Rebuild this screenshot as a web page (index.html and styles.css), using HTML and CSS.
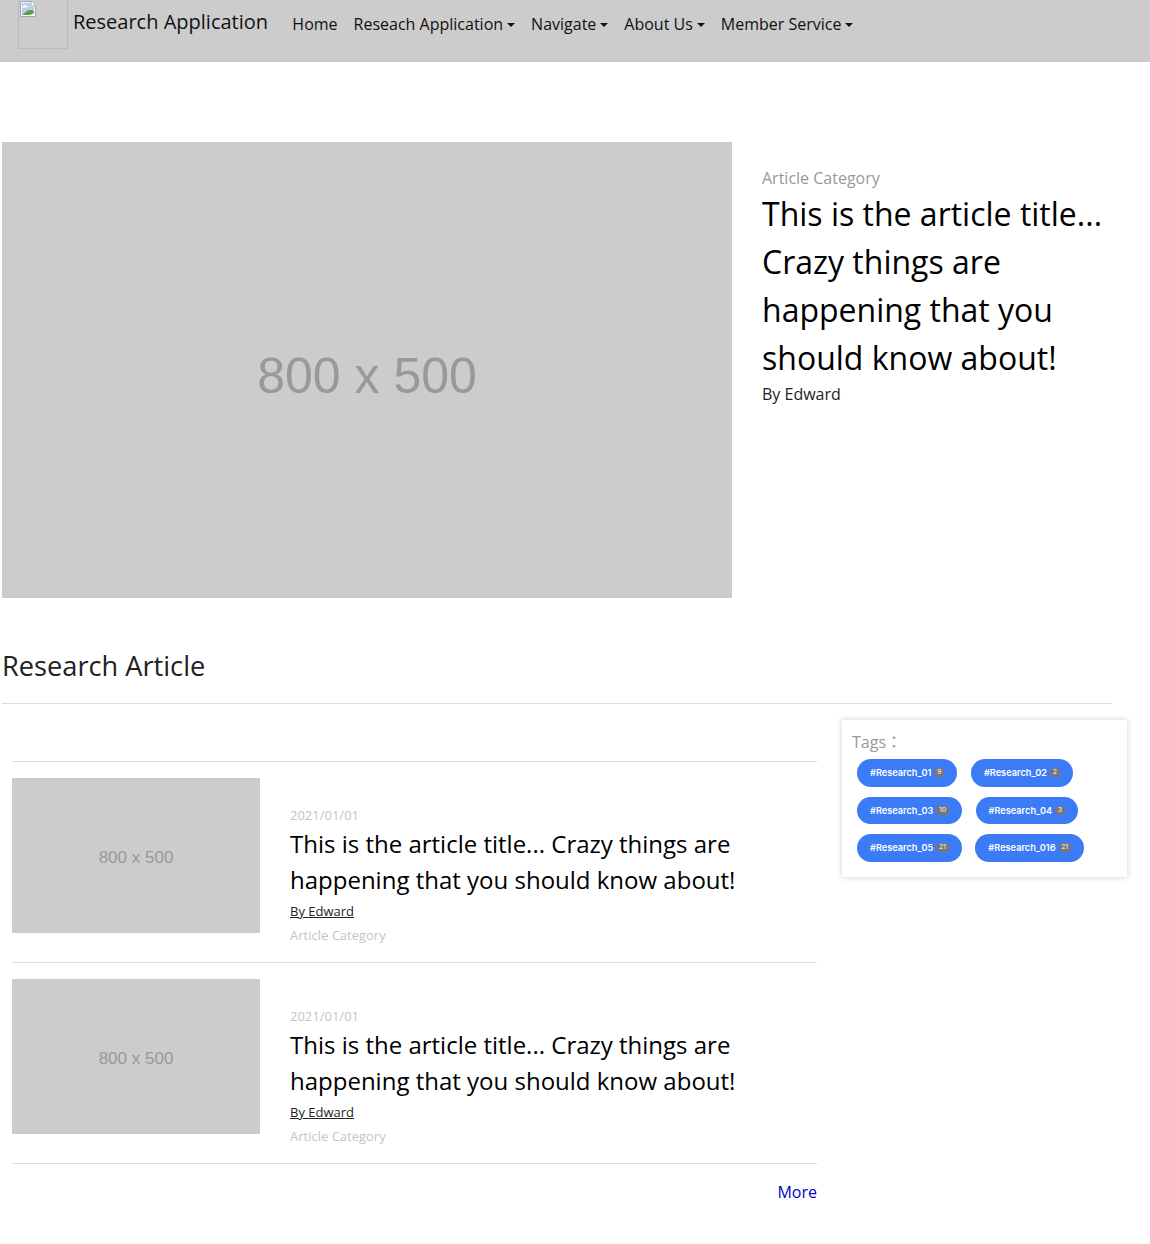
FILE: index.html
```html
<!DOCTYPE html>
<html lang="en">
<head>
    <meta charset="UTF-8">
    <title>Research Application</title>
    <link rel="stylesheet" href="styles.css">
</head>
<body>
    <nav class="navbar">
        <a class="brand" href="#">
            <span class="brand-img">
                <svg width="16" height="16" viewBox="0 0 16 16">
                    <path d="M0.5 0.5H11L15.5 5V15.5H0.5Z" fill="#f4f6f8" stroke="#a0a6ac"/>
                    <path d="M11 0.5V5H15.5" fill="#fff" stroke="#a0a6ac"/>
                    <path d="M2 2H10V6H14V14H2Z" fill="#b4cdee"/>
                    <path d="M3 5C4 3.5 6 3.5 7 5C8 5 8.5 6 8 6.5H3C2 6.5 2 5.2 3 5Z" fill="#fff"/>
                    <path d="M2 14L6 11C8 9 11 8 14 10.5V14Z" fill="#5c9e3c"/>
                    <path d="M10 14L14 12V14Z" fill="#f4f6f8"/>
                </svg>
            </span>
            <span class="brand-name">Research Application</span>
        </a>
        <ul class="nav-list">
            <li class="nav-link">Home</li>
            <li class="nav-link dropdown">Reseach Application</li>
            <li class="nav-link dropdown">Navigate</li>
            <li class="nav-link dropdown">About Us</li>
            <li class="nav-link dropdown">Member Service</li>
        </ul>
    </nav>

    <section class="hero">
        <div class="placeholder hero-img">800 x 500</div>
        <div class="hero-text">
            <div class="hero-category">Article Category</div>
            <h1 class="hero-title">This is the article title... Crazy things are happening that you should know about!</h1>
            <div class="hero-author">By Edward</div>
        </div>
    </section>

    <section class="research">
        <h2 class="section-title">Research Article</h2>
        <div class="research-body">
            <div class="article-list">
                <article class="article">
                    <div class="placeholder thumb">800 x 500</div>
                    <div class="article-text">
                        <div class="article-date">2021/01/01</div>
                        <h3 class="article-title">This is the article title... Crazy things are happening that you should know about!</h3>
                        <a class="article-author" href="#">By Edward</a>
                        <div class="article-category">Article Category</div>
                    </div>
                </article>
                <article class="article">
                    <div class="placeholder thumb">800 x 500</div>
                    <div class="article-text">
                        <div class="article-date">2021/01/01</div>
                        <h3 class="article-title">This is the article title... Crazy things are happening that you should know about!</h3>
                        <a class="article-author" href="#">By Edward</a>
                        <div class="article-category">Article Category</div>
                    </div>
                </article>
                <div class="more"><a href="#">More</a></div>
            </div>
            <aside class="tags">
                <div class="tags-title">Tags：</div>
                <div class="tag-row">
                    <a class="tag" href="#">#Research_01 <span class="count">9</span></a>
                    <a class="tag" href="#">#Research_02 <span class="count">2</span></a>
                </div>
                <div class="tag-row">
                    <a class="tag" href="#">#Research_03 <span class="count">10</span></a>
                    <a class="tag" href="#">#Research_04 <span class="count">3</span></a>
                </div>
                <div class="tag-row">
                    <a class="tag" href="#">#Research_05 <span class="count">21</span></a>
                    <a class="tag" href="#">#Research_016 <span class="count">21</span></a>
                </div>
            </aside>
        </div>
    </section>
</body>
</html>
```

FILE: styles.css
```css
body {
    margin: 0;
    font-family: "Open Sans", sans-serif;
    color: #000;
    background: #fff;
}
a {
    color: inherit;
    text-decoration: none;
}

/* top bar */
.navbar {
    display: flex;
    height: 62px;
    padding-left: 18px;
    background: #ccc;
}
.brand {
    display: flex;
    align-items: flex-start;
    color: #111;
}
.brand-img {
    display: block;
    box-sizing: border-box;
    width: 50px;
    height: 49px;
    padding: 1px 0 0 1px;
    border: 1px solid #bbb;
    border-top: none;
}
.brand-img svg {
    display: block;
}
.brand-name {
    margin: 6px 0 0 5px;
    font-size: 20px;
    line-height: 32px;
}
.nav-list {
    display: flex;
    gap: 16px;
    margin: 12px 0 0 24.3px;
    padding: 0;
    list-style: none;
}
.nav-link {
    font-size: 16px;
    line-height: 24px;
    color: #111;
}
.dropdown::after {
    content: "";
    display: inline-block;
    margin-left: 4px;
    vertical-align: 3px;
    border-top: 4px solid #111;
    border-left: 4px solid transparent;
    border-right: 4px solid transparent;
}

/* placeholders */
.placeholder {
    display: flex;
    box-sizing: border-box;
    align-items: center;
    justify-content: center;
    background: #ccc;
    color: #999;
    font-family: "Liberation Sans", sans-serif;
}

/* hero */
.hero {
    display: flex;
    margin: 80px 0 0 2px;
}
.hero-img {
    width: 730px;
    height: 456px;
    padding-top: 12px;
    font-size: 50px;
    flex: none;
}
.hero-text {
    width: 345px;
    margin: 24px 0 0 30px;
}
.hero-category {
    font-size: 16px;
    line-height: 24px;
    color: #999;
}
.hero-title {
    margin: 0;
    font-size: 32px;
    font-weight: 400;
    line-height: 48px;
}
.hero-author {
    font-size: 16px;
    line-height: 24px;
    color: #222;
}

/* list */
.research {
    margin-top: 48px;
    padding-left: 2px;
}
.section-title {
    width: 1110px;
    height: 57px;
    margin: 0;
    border-bottom: 1px solid #ddd;
    font-size: 27.2px;
    font-weight: 400;
    line-height: 40px;
    color: #222;
}
.research-body {
    display: flex;
    align-items: flex-start;
}
.article-list {
    width: 805px;
    margin: 57px 0 0 10px;
    border-top: 1px solid #ddd;
}
.article {
    display: flex;
    height: 200px;
    border-bottom: 1px solid #ddd;
}
.thumb {
    flex: none;
    width: 248px;
    height: 155px;
    margin-top: 16px;
    padding-top: 4px;
    font-size: 17px;
}
.article-text {
    margin: 44px 0 0 30px;
}
.article-date,
.article-category {
    font-size: 13px;
    line-height: 18px;
    color: #c4c4c4;
}
.article-title {
    margin: 2px 0 4px;
    font-size: 24px;
    font-weight: 400;
    line-height: 36px;
}
.article-author {
    display: block;
    width: fit-content;
    font-size: 13px;
    line-height: 18px;
    color: #222;
    text-decoration: underline;
}
.article-category {
    margin-top: 6px;
}
.more {
    margin-top: 16px;
    text-align: right;
    font-size: 16px;
    line-height: 24px;
    color: #0000cc;
}

/* tags */
.tags {
    box-sizing: border-box;
    width: 285px;
    height: 157px;
    margin: 16px 0 0 25px;
    padding: 10px 10px 0;
    background: #fff;
    box-shadow: 0 0 6px rgba(0,0,0,0.2);
}
.tags-title {
    margin-bottom: 5px;
    font-family: "Open Sans", "Noto Sans CJK TC", sans-serif;
    font-size: 16px;
    line-height: 24px;
    color: #999;
}
.tag-row {
    display: flex;
    gap: 13.5px;
    margin: 0 0 10px 5px;
}
.tag {
    display: flex;
    align-items: center;
    gap: 3px;
    height: 27.5px;
    padding: 0 13px;
    border-radius: 14px;
    background: #3b7bf6;
    color: #fff;
    font-family: Inter, sans-serif;
    font-size: 9.2px;
    font-weight: 600;
}
.count {
    min-width: 4px;
    padding: 1px 3px;
    border-radius: 4px;
    background: #777;
    font-size: 6.5px;
    font-weight: 400;
    line-height: 7px;
    text-align: center;
}
```
